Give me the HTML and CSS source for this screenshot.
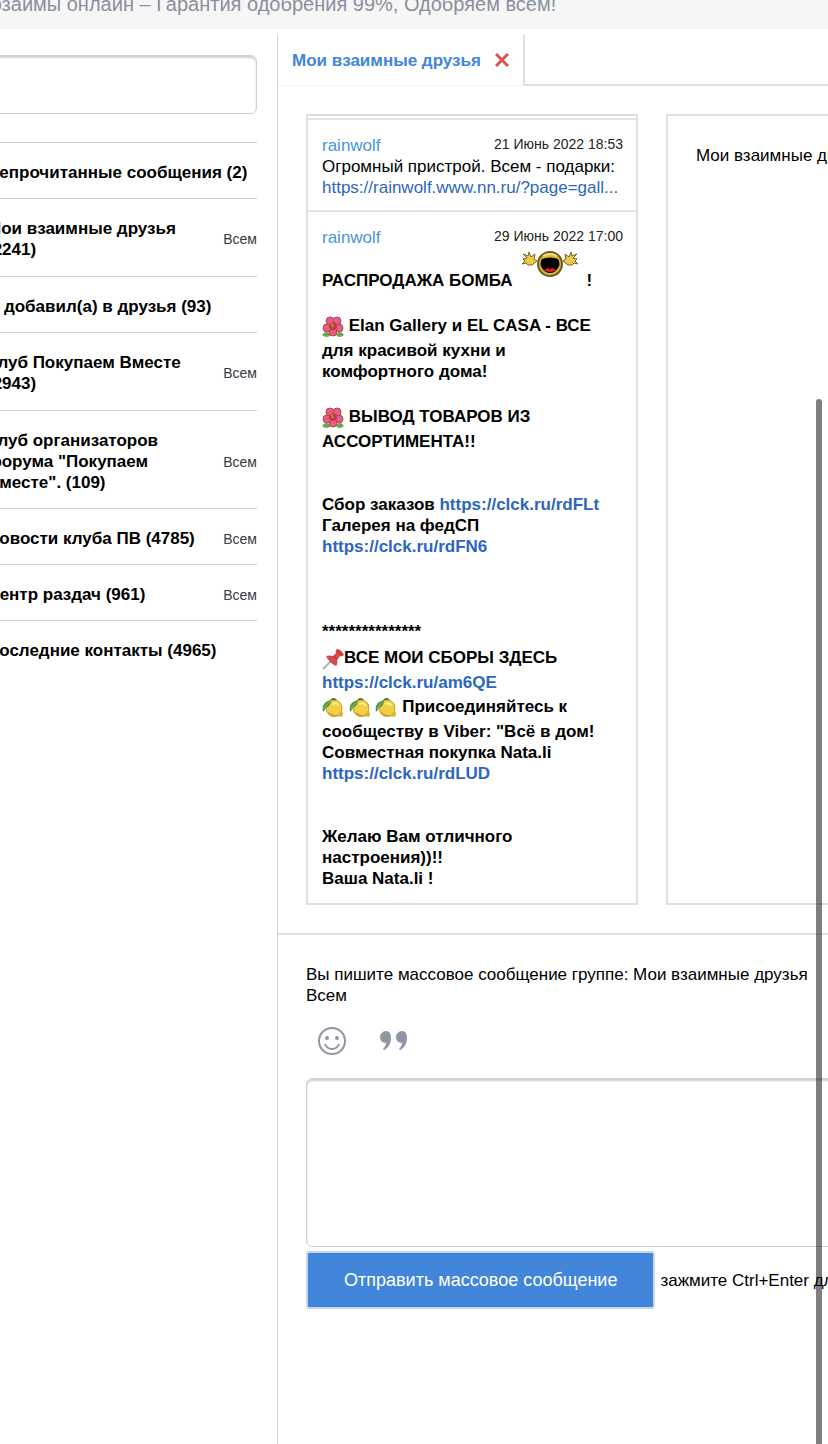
FILE: index.html
```
<!DOCTYPE html>
<html lang="ru">
<head>
    <meta charset="UTF-8">
    <meta name="viewport" content="width=device-width, initial-scale=1.0">
    <title>Сообщения</title>
    <link rel="stylesheet" href="styles.css">
</head>
<body>
    <!-- Shared emoji shapes -->
    <svg class="sprite" aria-hidden="true">
        <symbol id="flower" viewBox="0 0 22 22">
            <path d="M0 19q4-6 9 0-4 4-9 0zM22 19q-4-6-8 0 3 4 8 0z" fill="#6aa84f"/>
            <g fill="#e2607f" stroke="#c23c5c" stroke-width="1">
                <circle cx="8" cy="5" r="4"/>
                <circle cx="15" cy="5" r="4"/>
                <circle cx="17" cy="12" r="4"/>
                <circle cx="11" cy="16" r="4"/>
                <circle cx="5" cy="12" r="4"/>
            </g>
            <circle cx="11" cy="10" r="4" fill="#c0394f"/>
            <path d="M11 11l-2-5" stroke="#b8862c" stroke-width="2"/>
        </symbol>
        <symbol id="lemon" viewBox="0 0 22 22">
            <path d="M8 3q4-4 7 0l-3 2z" fill="#3f6a2a"/>
            <ellipse cx="12" cy="11" rx="8" ry="8" fill="#f0d044" stroke="#c9a02c" stroke-width="1"/>
            <path d="M15 18l5-4q2 3 0 6-3 0-5-2z" fill="#dcb637"/>
            <path d="M5 14q5 5 14 4-3 2-8 2-5-1-6-6z" fill="#cf9f2d"/>
            <path d="M11 7q3-2 5 1" stroke="#fbee9a" stroke-width="2" fill="none" stroke-linecap="round"/>
            <path d="M1 15Q-1 5 9 3q0 6-5 8-1 2-3 4z" fill="#5c9440"/>
            <path d="M2 12l5-7" stroke="#8cba68" stroke-width="1"/>
        </symbol>
        <symbol id="pin" viewBox="0 0 22 22">
            <path d="M1 21l9-9" stroke="#a9b4c0" stroke-width="2"/>
            <path d="M4 8q3-1 7 0l3-3q-1-3 1-4 5 1 7 6-2 2-4 1l-3 4q1 4-1 6-7-3-10-10z" fill="#d94a4a"/>
            <path d="M11 8q3 1 4 4M15 2q3 1 4 5" stroke="#a52a31" stroke-width="1" fill="none"/>
        </symbol>
    </svg>

    <header class="promo">Микрозаймы онлайн – Гарантия одобрения 99%, Одобряем всем!</header>

    <div class="messenger">
        <aside class="sidebar">
            <input class="search" type="text" aria-label="Поиск">
            <ul class="groups">
                <li class="group"><a href="#">Непрочитанные сообщения (2)</a></li>
                <li class="group group-tall"><a href="#">Мои взаимные друзья<br>(2241)</a><button class="all">Всем</button></li>
                <li class="group"><a href="#">Я добавил(а) в друзья (93)</a></li>
                <li class="group group-tall"><a href="#">Клуб Покупаем Вместе<br>(2943)</a><button class="all">Всем</button></li>
                <li class="group"><a href="#">Клуб организаторов<br>форума "Покупаем<br>Вместе". (109)</a><button class="all">Всем</button></li>
                <li class="group"><a href="#">Новости клуба ПВ (4785)</a><button class="all">Всем</button></li>
                <li class="group"><a href="#">Центр раздач (961)</a><button class="all">Всем</button></li>
                <li class="group"><a href="#">Последние контакты (4965)</a></li>
            </ul>
        </aside>

        <main class="content">
            <nav class="tabs">
                <div class="tab">
                    <a href="#">Мои взаимные друзья</a>
                    <button class="close" aria-label="Закрыть">
                        <svg width="14" height="14" viewBox="0 0 14 14"><path d="M1 1l12 12M13 1L1 13" stroke="#d9534f" stroke-width="3"/></svg>
                    </button>
                </div>
                <div class="tabs-rest"></div>
            </nav>

            <div class="panels">
                <section class="history">
                    <article class="message">
                        <div class="message-head"><a class="author" href="#">rainwolf</a><time>21 Июнь 2022 18:53</time></div>
                        <p>Огромный пристрой. Всем - подарки:</p>
                        <p><a href="#">https://rainwolf.www.nn.ru/?page=gall...</a></p>
                    </article>
                    <article class="message message-bold">
                        <div class="message-head"><a class="author" href="#">rainwolf</a><time>29 Июнь 2022 17:00</time></div>
                        <p class="bomb">РАСПРОДАЖА БОМБА
                            <svg width="58" height="30" viewBox="0 -3 58 30">
                                <g fill="#ecc94b" stroke="#7a6420" stroke-width="1">
                                    <path d="M2 8l4-1-4-4 5 2 1-4 2 5 4-3-1 5 3 2-5 4-4 0-2-2-4 1 3-3z"/>
                                    <path d="M56 8l-4-1 4-4-5 2-1-4-2 5-4-3 1 5-3 2 5 4 4 0 2-2 4 1-3-3z"/>
                                </g>
                                <circle cx="29" cy="13" r="12" fill="#d9b637" stroke="#6f5a1d" stroke-width="2"/>
                                <path d="M21 8q8-3 16 0 3 5 0 9-3 5-8 5t-8-5q-3-4 0-9z" fill="#000"/>
                                <path d="M23 19q3-3 6-1 3-2 6 1-6 4-12 0z" fill="#e02020"/>
                                <path d="M22 5q7-4 14 0" stroke="#f7e07a" stroke-width="2" fill="none"/>
                            </svg>
                            <span>!</span>
                        </p>
                        <br>
                        <p class="with-emoji"><svg class="emoji"><use href="#flower"/></svg> Elan Gallery и EL CASA - ВСЕ</p>
                        <p>для красивой кухни и<br>комфортного дома!</p>
                        <br>
                        <p class="with-emoji"><svg class="emoji"><use href="#flower"/></svg> ВЫВОД ТОВАРОВ ИЗ</p>
                        <p>АССОРТИМЕНТА!!</p>
                        <br><br>
                        <p>Сбор заказов <a href="#">https://clck.ru/rdFLt</a></p>
                        <p>Галерея на федСП</p>
                        <p><a href="#">https://clck.ru/rdFN6</a></p>
                        <br><br><br>
                        <p class="stars">***************</p>
                        <p class="with-emoji"><svg class="emoji"><use href="#pin"/></svg>ВСЕ МОИ СБОРЫ ЗДЕСЬ</p>
                        <p><a href="#">https://clck.ru/am6QE</a></p>
                        <p class="with-emoji"><svg class="emoji"><use href="#lemon"/></svg> <svg class="emoji"><use href="#lemon"/></svg> <svg class="emoji"><use href="#lemon"/></svg> Присоединяйтесь к</p>
                        <p>сообществу в Viber: "Всё в дом!<br>Совместная покупка Nata.li</p>
                        <p><a href="#">https://clck.ru/rdLUD</a></p>
                        <br><br>
                        <p>Желаю Вам отличного<br>настроения))!!<br>Ваша Nata.li !</p>
                    </article>
                </section>
                <section class="recipients">Мои взаимные друзья</section>
            </div>

            <form class="compose">
                <label class="compose-label" for="text">Вы пишите массовое сообщение группе: Мои взаимные друзья<br>Всем</label>
                <div class="tools">
                    <button type="button" aria-label="Смайлы">
                        <svg width="28" height="28" viewBox="0 0 28 28" fill="none" stroke="#9096a3" stroke-width="2">
                            <circle cx="14" cy="14" r="13"/>
                            <path d="M7 17q2 5 7 5t7-5" stroke-width="2"/>
                            <circle cx="9" cy="11" r="2" fill="#9096a3" stroke="none"/>
                            <circle cx="19" cy="11" r="2" fill="#9096a3" stroke="none"/>
                        </svg>
                    </button>
                    <button type="button" aria-label="Цитата">
                        <svg width="28" height="20" viewBox="0 0 28 20" fill="#9096a3">
                            <path id="quote" d="M6 0c3 0 5 2 5 7 0 6-3 10-7 12l-1-1c2-2 3-4 3-6-4 0-6-3-6-6s3-6 6-6z"/>
                            <use href="#quote" x="16"/>
                        </svg>
                    </button>
                </div>
                <textarea id="text"></textarea>
                <div class="send-row">
                    <button class="send" type="submit">Отправить массовое сообщение</button>
                    <span>зажмите Ctrl+Enter для отправки</span>
                </div>
            </form>
        </main>
    </div>
    <div class="scrollbar"></div>
</body>
</html>
```
FILE: styles.css
```
* {
    box-sizing: border-box;
}
body {
    margin: 0;
    font-family: "Liberation Sans", Arial, sans-serif;
    font-size: 17px;
    line-height: 21px;
    color: #000;
    background-color: #fff;
    overflow: hidden;
}
a {
    color: #2c67bd;
    text-decoration: none;
}
p {
    margin: 0;
}
button {
    font-family: inherit;
    background: none;
    border: none;
    padding: 0;
    cursor: pointer;
}
.sprite {
    display: none;
}
.promo {
    margin-top: -8px;
    margin-left: -57px;
    padding-bottom: 13px;
    font-size: 20px;
    line-height: 24px;
    color: #8a8fa0;
    background-color: #f6f6f6;
    white-space: nowrap;
}
.messenger {
    display: flex;
    min-height: 100vh;
    padding-top: 6px;
    overflow: hidden;
}
.sidebar {
    flex: 0 0 290px;
    margin-left: -13px;
    padding: 20px 20px 0 0;
}
.search {
    display: block;
    width: 100%;
    height: 59px;
    border: 1px solid #d0d0d0;
    border-radius: 6px;
    box-shadow: inset 0 2px 2px #d0d0d0;
}
.groups {
    margin: 28px 0 0;
    padding: 0;
    list-style: none;
}
.group {
    display: flex;
    align-items: center;
    justify-content: space-between;
    padding: 19px 0 15px;
    border-top: 1px solid #d0d0d0;
    font-weight: bold;
    white-space: nowrap;
}
.group-tall {
    padding-bottom: 16px;
}
.group a {
    color: #000;
}
.all {
    font-size: 14px;
    color: #333a45;
}
.content {
    flex: 1;
    min-width: 0;
    border-left: 1px solid #d0d0d0;
}
.tabs {
    display: flex;
    height: 51px;
}
.tab {
    display: flex;
    align-items: center;
    gap: 14px;
    padding: 0 14px;
    border-right: 2px solid #e0e0e0;
    border-bottom: 1px solid #f3f3f3;
    font-weight: bold;
    white-space: nowrap;
}
.tab a {
    color: #4186da;
}
.close {
    display: flex;
}
.tabs-rest {
    flex: 1;
    border-bottom: 2px solid #e0e0e0;
}
.panels {
    display: flex;
    gap: 28px;
    padding: 28px 0 28px 28px;
    border-bottom: 2px solid #e0e0e0;
}
.history {
    flex: 0 0 332px;
    padding: 2px 0 0;
    border: 2px solid #e0e0e0;
}
.message {
    padding: 15px 13px 12px 14px;
    border-top: 2px solid #e4e4e4;
}
.message + .message {
    padding-bottom: 14px;
}
.message-bold p {
    font-weight: bold;
}
.message-head {
    display: flex;
    justify-content: space-between;
}
.message-head time {
    font-size: 14px;
    line-height: 18px;
    color: #222;
}
.message .author {
    color: #4a93e0;
}
.message .bomb {
    display: flex;
    align-items: flex-end;
    gap: 8px;
    height: 43px;
}
.bomb svg {
    align-self: flex-start;
}
.with-emoji {
    line-height: 28px;
}
.emoji {
    width: 22px;
    height: 22px;
    vertical-align: middle;
}
.stars {
    line-height: 24px;
}
.recipients {
    flex: 1;
    margin-right: -28px;
    padding: 29px 28px;
    border: 2px solid #e0e0e0;
    white-space: nowrap;
}
.compose {
    padding: 29px 0 28px 28px;
}
.compose-label {
    display: block;
    white-space: nowrap;
}
.tools {
    display: flex;
    align-items: center;
    gap: 34px;
    padding: 21px 12px 23px;
}
.tools button {
    display: flex;
}
textarea {
    display: block;
    width: calc(100% + 28px);
    height: 169px;
    border: 1px solid #d0d0d0;
    border-radius: 6px;
    box-shadow: inset 0 2px 2px #d0d0d0;
    resize: none;
}
.send-row {
    display: flex;
    align-items: center;
    gap: 5px;
    margin-top: 4px;
    white-space: nowrap;
}
.send {
    height: 58px;
    padding: 0 36px;
    border: 2px solid #c9d6e4;
    border-radius: 3px;
    background-color: #4186da;
    color: #fff;
    font-size: 18px;
}
.scrollbar {
    position: fixed;
    top: 399px;
    right: 6px;
    bottom: 0;
    width: 6px;
    border-radius: 3px 3px 0 0;
    background-color: rgba(0, 0, 0, 0.5);
}
```
